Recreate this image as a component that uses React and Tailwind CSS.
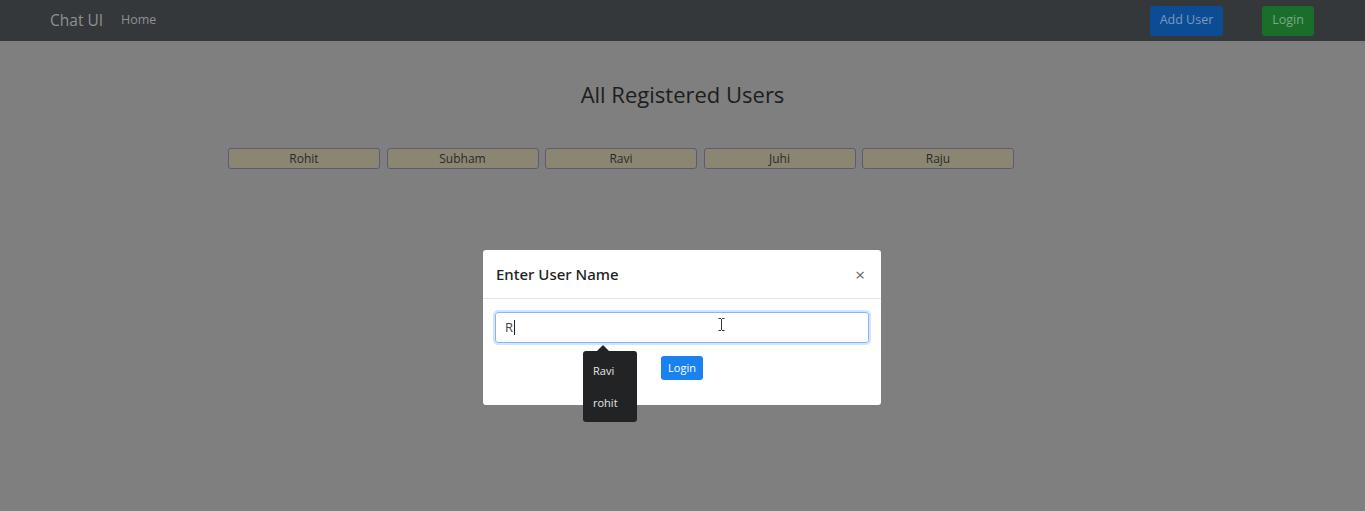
const users = ["Rohit", "Subham", "Ravi", "Juhi", "Raju"];
const suggestions = ["Ravi", "rohit"];

export default function App() {
  return (
    <div
      className="min-h-[511px] bg-[#7f7f7f] text-[#1c1c1c]"
      style={{ fontFamily: '"Open Sans", "Noto Sans", sans-serif' }}
    >
      <nav className="flex h-[41px] items-center bg-[#35383b] pl-[50px] pr-[51px]">
        <span className="text-[15.5px] text-[#8d9094]">Chat UI</span>
        <span className="ml-[18px] text-[12.5px] text-[#8d9094]">Home</span>
        <div className="ml-auto flex items-center">
          <button className="h-[30px] w-[73px] rounded-[3px] bg-[#0c4c95] text-[12.5px] text-[#7d99bd]">
            Add User
          </button>
          <button className="ml-[39px] h-[30px] w-[52px] rounded-[3px] bg-[#1a6e2a] text-[12.5px] text-[#7aa784]">
            Login
          </button>
        </div>
      </nav>

      <h1 className="mt-[38px] text-center text-[22px] leading-[30px] text-[#1d1d1d]">
        All Registered Users
      </h1>

      <div className="mt-[39px] flex gap-[6.5px] pl-[228px]">
        {users.map((u) => (
          <button
            key={u}
            className="h-[21px] w-[152px] rounded-[3px] border border-[#5f5878] bg-[#8a8672] pt-px text-[12px] leading-none text-[#2a2a2a]"
          >
            {u}
          </button>
        ))}
      </div>

      <div className="mt-[81px] flex justify-center pr-[1px]">
        <div className="relative w-[398px] rounded-[3px] bg-white">
          <div className="flex h-[49px] items-center justify-between border-b border-[#e6e6e6] px-[13px]">
            <span
              className="text-[15px] font-medium text-[#222]"
              style={{ fontFamily: '"Noto Sans", "Open Sans", sans-serif' }}
            >
              Enter User Name
            </span>
            <span className="mr-[3px] text-[17px] leading-none text-[#666]">×</span>
          </div>
          <div className="px-[12px] pb-[25px] pt-[13px]">
            <div className="relative flex h-[31px] items-center rounded-[3px] border border-[#86b7f0] pl-[9px] shadow-[0_0_0_2px_rgba(130,180,240,0.35)]">
              <span className="text-[13px] text-[#444]">R</span>
              <span className="ml-[1px] h-[15px] w-px bg-[#222]" />
              <svg
                className="absolute left-[222px] top-[5px]"
                width="7"
                height="13"
                viewBox="0 0 7 13"
                fill="none"
                stroke="#333"
                strokeWidth="1"
              >
                <path d="M0.5 0.5h2.5M4 0.5h2.5M3.5 1v11M0.5 12.5h2.5M4 12.5h2.5" />
              </svg>
            </div>
            <div className="mt-[13px] flex justify-center">
              <button className="h-[24px] rounded-[3px] bg-[#1a82f0] px-[7px] text-[11px] text-white">
                Login
              </button>
            </div>
          </div>

          <div className="absolute left-[100px] top-[101px] flex w-[54px] flex-col gap-[16px] rounded-[3px] bg-[#222325] pb-[11px] pl-[10px] pt-[12px]">
            <div className="absolute -top-[6px] left-[14px] h-0 w-0 border-x-[6px] border-b-[6px] border-x-transparent border-b-[#222325]" />
            {suggestions.map((s) => (
              <div key={s} className="text-[11px] leading-[16px] text-[#e6e6e6]">
                {s}
              </div>
            ))}
          </div>
        </div>
      </div>
    </div>
  );
}
